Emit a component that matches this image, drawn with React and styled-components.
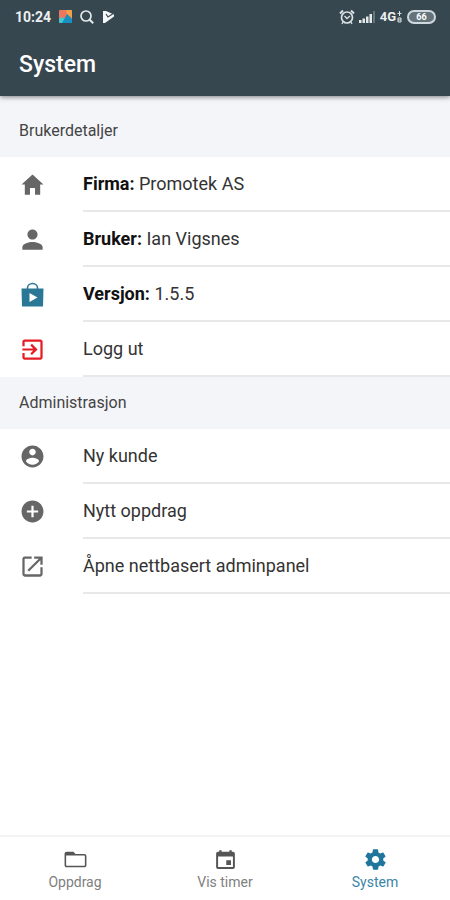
import React from 'react';
import styled, { createGlobalStyle } from 'styled-components';
import {
  IoMdHome,
  IoMdPerson,
  IoMdExit,
  IoMdContact,
  IoMdAddCircle,
  IoMdOpen,
  IoMdFolderOpen,
  IoMdCalendar,
  IoMdSettings,
} from 'react-icons/io';

const GlobalStyle = createGlobalStyle`
  * {
    box-sizing: border-box;
  }
  body {
    margin: 0;
    background: #fff;
    color: #222;
    font-family: Roboto, "Liberation Sans", sans-serif;
  }
`;

const Page = styled.div`
  display: flex;
  flex-direction: column;
  min-height: 100vh;
`;

const Header = styled.header`
  position: relative;
  background: #37474f;
  color: #fff;
  box-shadow: 0 1px 5px rgba(0, 0, 0, 0.5);
`;

const StatusBar = styled.div`
  display: flex;
  align-items: center;
  justify-content: space-between;
  height: 33px;
  padding: 0 14px 0 15px;
  font-size: 14px;
  font-weight: 700;
  color: #eceff1;
`;

const StatusGroup = styled.div`
  display: flex;
  align-items: center;
  gap: ${({ $gap }) => $gap}px;
`;

const Network = styled.span`
  display: flex;
  align-items: center;
  font-size: 13px;
`;

const Battery = styled.span`
  width: 29px;
  height: 14px;
  border: 2px solid #cfd8dc;
  border-radius: 7px;
  background: #65747b;
  color: #fff;
  font-size: 9px;
  line-height: 10px;
  text-align: center;
`;

const Title = styled.h1`
  margin: 0;
  padding: 0 19px;
  height: 63px;
  font-size: 23px;
  font-weight: 500;
  line-height: 63px;
`;

const Content = styled.main`
  flex: 1;
`;

const SectionTitle = styled.h2`
  margin: 0;
  padding: ${({ $first }) => ($first ? '8px' : '0')} 19px 0;
  background: #f4f5f9;
  color: #444;
  font-size: 16px;
  font-weight: 400;
  line-height: ${({ $first }) => ($first ? 53 : 52)}px;
`;

const List = styled.ul`
  margin: 0;
  padding: 0;
  list-style: none;
`;

const Row = styled.div`
  display: flex;
  align-items: center;
  width: 100%;
  height: 55px;
  padding: 0 0 0 19px;
  border: 0;
  background: none;
  color: #333;
  font: inherit;
  text-align: left;
  text-decoration: none;
`;

const RowIcon = styled.span`
  display: flex;
  width: 64px;
  color: ${({ $color }) => $color || '#666'};
  font-size: 27px;
`;

const RowLabel = styled.span`
  flex: 1;
  height: 55px;
  border-bottom: 2px solid #e8e8e8;
  font-size: 18px;
  line-height: 54px;

  strong {
    color: #111;
    font-weight: 700;
  }
`;

const TabBar = styled.nav`
  position: sticky;
  bottom: 0;
  display: flex;
  height: 65px;
  border-top: 2px solid #f3f3f3;
  background: #fff;
`;

const Tab = styled.a`
  flex: 1;
  display: flex;
  flex-direction: column;
  align-items: center;
  gap: 1px;
  padding-top: 10px;
  color: ${({ $active }) => ($active ? '#3a86a6' : '#808080')};
  font-size: 14px;
  line-height: 18px;
  text-decoration: none;

  svg {
    font-size: 25px;
    color: ${({ $active }) => ($active ? '#1f759b' : '#555')};
  }
`;

const BagIcon = () => (
  <svg width="27" height="27" viewBox="0 0 27 27" aria-hidden="true">
    <path
      d="M8.5 8V7a5 4.5 0 0 1 10 0v1"
      fill="none"
      stroke="currentColor"
      strokeWidth="1.6"
    />
    <path d="M2.500 7.500h22L24 25.500H3z" fill="currentColor" />
    <path d="m10.500 12 8 4.500-8 4.500z" fill="#fff" />
  </svg>
);

const details = [
  { icon: IoMdHome, label: 'Firma:', value: 'Promotek AS' },
  { icon: IoMdPerson, label: 'Bruker:', value: 'Ian Vigsnes' },
  { icon: BagIcon, label: 'Versjon:', value: '1.5.5', color: '#2b7896' },
  { icon: IoMdExit, text: 'Logg ut', as: 'button', color: '#e51c23' },
];

const admin = [
  { icon: IoMdContact, text: 'Ny kunde', as: 'button' },
  { icon: IoMdAddCircle, text: 'Nytt oppdrag', as: 'button' },
  { icon: IoMdOpen, text: 'Åpne nettbasert adminpanel', as: 'a' },
];

const tabs = [
  { icon: IoMdFolderOpen, text: 'Oppdrag', href: '#oppdrag' },
  { icon: IoMdCalendar, text: 'Vis timer', href: '#timer' },
  { icon: IoMdSettings, text: 'System', href: '#system', active: true },
];

const PhotoIcon = () => (
  <svg width="13" height="13" viewBox="0 0 13 13">
    <rect width="13" height="13" rx="1" fill="#e9785f" />
    <path d="M7 0h5a1 1 0 0 1 1 1v7L8 4z" fill="#f2a14b" />
    <path d="M0 9 3 7l4 3v3H1a1 1 0 0 1-1-1z" fill="#40c9cf" />
    <path d="M3 13 8 4l5 5v3a1 1 0 0 1-1 1z" fill="#168fc2" />
  </svg>
);

const SearchIcon = () => (
  <svg width="14" height="14" viewBox="0 0 14 14" fill="none" stroke="#e4e9eb">
    <circle cx="6" cy="6" r="5" strokeWidth="1.7" />
    <path d="m9.5 9.5 3.7 3.7" strokeWidth="2" />
  </svg>
);

const PlayIcon = () => (
  <svg width="13" height="13" viewBox="0 0 13 13">
    <path d="M1 1h3l8 3.5v2L3 13H1z" fill="#f5f7f8" />
    <path d="m4 4 2 3 6-4" fill="none" stroke="#37474f" strokeWidth="1.2" />
  </svg>
);

const AlarmIcon = () => (
  <svg width="16" height="16" viewBox="0 0 16 16" fill="none" stroke="#dce2e5">
    <circle cx="8" cy="8.5" r="5.5" strokeWidth="1.7" />
    <path d="M1 4.5 4 1.5M15 4.5 12 1.5" strokeWidth="2" />
    <path d="m5.5 7 2.5 2.5L11 7M4 13l-1 2M12 13l1 2" strokeWidth="1.3" />
  </svg>
);

const SignalIcon = () => (
  <svg width="17" height="12" viewBox="0 0 17 12" fill="#e4e9eb">
    <path d="M0 9h2.5v3H0zM3.5 7.5H6V12H3.500zM7 5.500h2.500V12H7zM10.5 3H13v9h-2.500z" />
    <path d="M14 0h2v12h-2z" fill="#66757c" />
  </svg>
);

const DataIcon = () => (
  <svg width="7" height="12" viewBox="0 0 7 12" fill="none" stroke="#dce2e5">
    <path d="M3.5 0v5M1.5 2.500h4M2 7h3v4H2zM2 9h3" />
  </svg>
);

function ListItem({ item }) {
  const Icon = item.icon;
  return (
    <li>
      <Row
        as={item.as}
        type={item.as === 'button' ? 'button' : undefined}
        href={item.as === 'a' ? '#admin' : undefined}
      >
        <RowIcon $color={item.color}>
          <Icon aria-hidden="true" />
        </RowIcon>
        <RowLabel>
          {item.label && <strong>{item.label} </strong>}
          {item.value || item.text}
        </RowLabel>
      </Row>
    </li>
  );
}

export default function App() {
  return (
    <Page>
      <GlobalStyle />
      <Header>
        <StatusBar>
          <StatusGroup $gap={8}>
            <span>10:24</span>
            <PhotoIcon />
            <SearchIcon />
            <PlayIcon />
          </StatusGroup>
          <StatusGroup $gap={4}>
            <AlarmIcon />
            <SignalIcon />
            <Network>
              4G
              <DataIcon />
            </Network>
            <Battery>66</Battery>
          </StatusGroup>
        </StatusBar>
        <Title>System</Title>
      </Header>
      <Content>
        <SectionTitle $first>Brukerdetaljer</SectionTitle>
        <List>
          {details.map((item, index) => (
            <ListItem key={index} item={item} />
          ))}
        </List>
        <SectionTitle>Administrasjon</SectionTitle>
        <List>
          {admin.map((item, index) => (
            <ListItem key={index} item={item} />
          ))}
        </List>
      </Content>
      <TabBar>
        {tabs.map(({ icon: Icon, text, href, active }) => (
          <Tab key={href} href={href} $active={active}>
            <Icon aria-hidden="true" />
            {text}
          </Tab>
        ))}
      </TabBar>
    </Page>
  );
}
